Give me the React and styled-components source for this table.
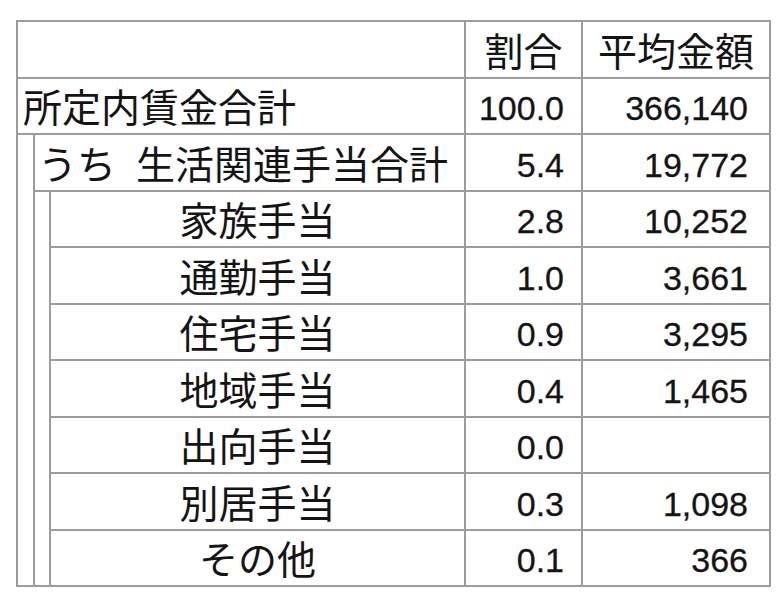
import styled, { createGlobalStyle } from 'styled-components';

const GlobalStyle = createGlobalStyle`
  html, body {
    margin: 0;
    background: #ffffff;
  }
`;

const rows = [
  { label: '所定内賃金合計', ratio: '100.0', amount: '366,140', level: 0 },
  { prefix: 'うち', label: '生活関連手当合計', ratio: '5.4', amount: '19,772', level: 1 },
  { label: '家族手当', ratio: '2.8', amount: '10,252', level: 2 },
  { label: '通勤手当', ratio: '1.0', amount: '3,661', level: 2 },
  { label: '住宅手当', ratio: '0.9', amount: '3,295', level: 2 },
  { label: '地域手当', ratio: '0.4', amount: '1,465', level: 2 },
  { label: '出向手当', ratio: '0.0', amount: '', level: 2 },
  { label: '別居手当', ratio: '0.3', amount: '1,098', level: 2 },
  { label: 'その他', ratio: '0.1', amount: '366', level: 2 },
];

const LINE = '2px solid #9c9c9c';

const Page = styled.div`
  padding: 20px 0 0 16px;
`;

const Table = styled.table`
  border-collapse: collapse;
  table-layout: fixed;
  width: 753px;
  color: #141414;
`;

const Col = styled.col`
  width: ${(p) => p.$w}px;
`;

const Row = styled.tr`
  height: 56.5px;
`;

const Cell = styled.td`
  border: ${LINE};
  padding: 0;
  vertical-align: middle;
  white-space: nowrap;
  overflow: hidden;
`;

const HeadCell = styled(Cell).attrs({ as: 'th' })`
  font-family: 'Noto Sans CJK JP', 'Noto Sans', sans-serif;
  font-size: 39px;
  font-weight: 400;
  text-align: center;
  line-height: 1;
`;

const LabelCell = styled(Cell)`
  font-family: 'Noto Sans CJK JP', 'Noto Sans', sans-serif;
  font-size: 39px;
  line-height: 1;
  text-align: ${(p) => (p.$center ? 'center' : 'left')};
  padding-left: ${(p) => (p.$center ? 0 : p.$pad)}px;
`;

const Prefix = styled.span`
  margin-right: 20px;
`;

const Indent = styled(Cell)``;

const NumCell = styled(Cell)`
  font-family: 'Liberation Sans', Arial, sans-serif;
  font-size: 34px;
  line-height: 1;
  text-align: right;
  padding-right: ${(p) => p.$pad}px;
  padding-top: 5px;
  -webkit-text-stroke: 0.3px #141414;
`;

function BodyRow({ item, index }) {
  return (
    <Row>
      {item.level === 1 && <Indent rowSpan={rows.length - 1} />}
      {item.level === 2 && index === 2 && <Indent rowSpan={rows.length - 2} />}
      <LabelCell
        colSpan={3 - item.level}
        $center={item.level === 2}
        $pad={item.level === 0 ? 5 : 3}
      >
        {item.prefix && <Prefix>{item.prefix}</Prefix>}
        {item.label}
      </LabelCell>
      <NumCell $pad={17}>{item.ratio}</NumCell>
      <NumCell $pad={21}>{item.amount}</NumCell>
    </Row>
  );
}

export default function App() {
  return (
    <>
      <GlobalStyle />
      <Page>
        <Table>
          <colgroup>
            <Col $w={17} />
            <Col $w={16} />
            <Col $w={415} />
            <Col $w={117} />
            <Col $w={188} />
          </colgroup>
          <thead>
            <Row>
              <HeadCell colSpan={3} />
              <HeadCell>割合</HeadCell>
              <HeadCell>平均金額</HeadCell>
            </Row>
          </thead>
          <tbody>
            {rows.map((item, i) => (
              <BodyRow key={item.label} item={item} index={i} />
            ))}
          </tbody>
        </Table>
      </Page>
    </>
  );
}
